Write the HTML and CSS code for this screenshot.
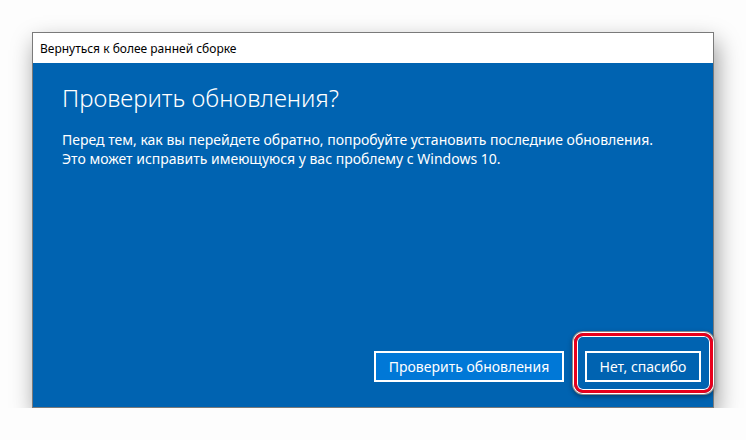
FILE: index.html
```html
<!DOCTYPE html>
<html lang="ru">
<head>
  <meta charset="UTF-8">
  <meta name="viewport" content="width=device-width, initial-scale=1">
  <title>Вернуться к более ранней сборке</title>
  <link rel="stylesheet" href="styles.css">
</head>
<body>
  <div class="dialog">
    <div class="titlebar">Вернуться к более ранней сборке</div>
    <div class="content">
      <h1>Проверить обновления?</h1>
      <p>Перед тем, как вы перейдете обратно, попробуйте установить последние обновления.<br>
      Это может исправить имеющуюся у вас проблему с Windows 10.</p>
      <div class="buttons">
        <button class="btn btn-primary">Проверить обновления</button>
        <span class="marked">
          <button class="btn btn-cancel">Нет, спасибо</button>
        </span>
      </div>
    </div>
  </div>
</body>
</html>
```
FILE: styles.css
```css
* { box-sizing: border-box; margin: 0; padding: 0; }
body { background: #fdfdfd; font-family: "Noto Sans", "Open Sans", sans-serif; padding: 32px 0 0 32px; }
.dialog { width: 682px; height: 376px; display: flex; flex-direction: column; border: 1px solid #7a7a7a; box-shadow: 3px 10px 22px rgba(0,0,0,0.4); }
.titlebar { height: 30px; background: #fff; color: #000; font-size: 12px; padding: 7px 0 0 7px; }
.content { flex: 1; background: #0063b1; color: #fff; display: flex; flex-direction: column; padding: 19px 12px 25px 29px; }
h1 { font-weight: 300; font-size: 24px; line-height: 32px; margin-bottom: 16px; }
p { font-size: 14px; line-height: 19px; }
.buttons { margin-top: auto; display: flex; justify-content: flex-end; gap: 21px; }
.btn { height: 31px; border: 2px solid #fff; color: #fff; background: #0063b1; font-family: inherit; font-size: 14px; padding: 0; text-align: center; }
.btn-primary { background: #0078d7; width: 190px; }
.btn-cancel { width: 116px; }
.marked { position: relative; display: inline-flex; }
.marked::after { content: ""; position: absolute; left: -11px; top: -18px; right: -12px; bottom: -11px; border: 3px solid #e8001c; border-radius: 9px; box-shadow: 0 0 0 1px #fff, 0 0 0 2px #8a8a8a, 0 2px 5px 2px rgba(0,0,0,0.35), inset 0 0 0 1px #fff; }
```
